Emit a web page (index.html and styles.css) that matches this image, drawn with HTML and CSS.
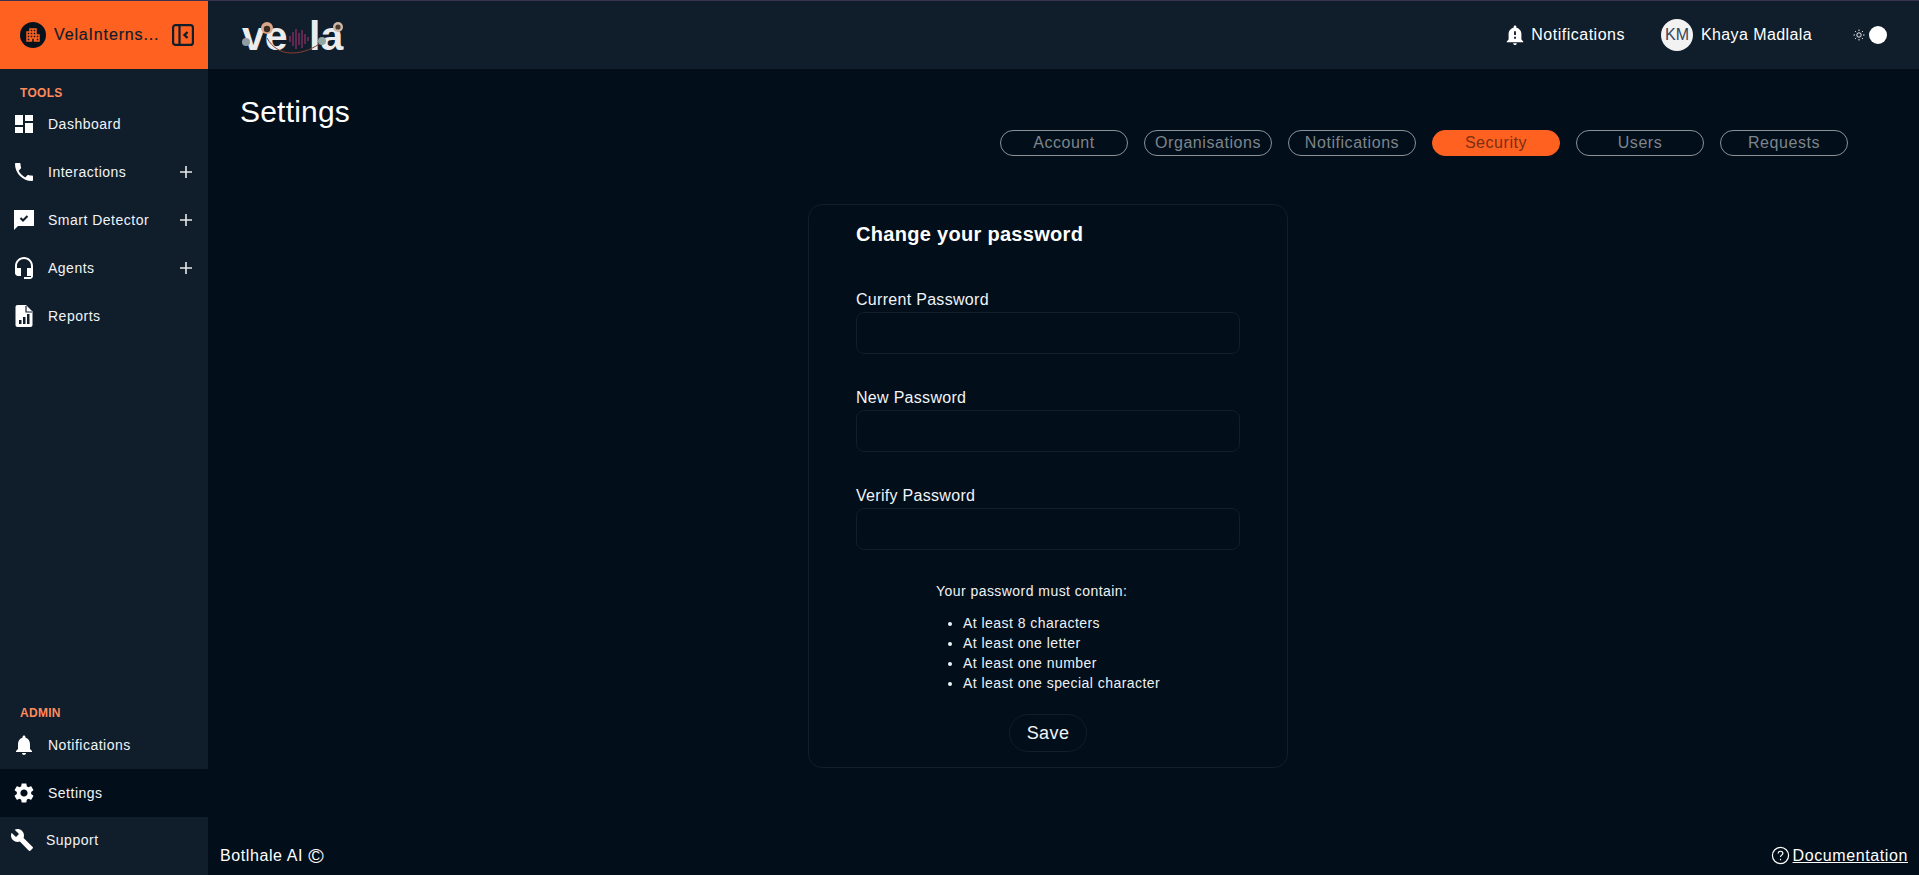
FILE: index.html
```html
<!DOCTYPE html>
<html>

<head>
    <title>Settings</title>
    <link rel="stylesheet" href="styles.css">
</head>

<body>
    <aside class="sidebar">
        <div class="org">
            <span class="org-badge">
                <svg viewBox="0 0 24 24" width="18" height="18"><path fill="#ff6120" d="M17 11V3H7v4H3v14h8v-4h2v4h8V11h-4zM7 19H5v-2h2v2zm0-4H5v-2h2v2zm0-4H5V9h2v2zm4 4H9v-2h2v2zm0-4H9V9h2v2zm0-4H9V5h2v2zm4 8h-2v-2h2v2zm0-4h-2V9h2v2zm0-4h-2V5h2v2zm4 12h-2v-2h2v2zm0-4h-2v-2h2v2z"/></svg>
            </span>
            <span class="org-name">VelaInterns...</span>
            <svg class="collapse" viewBox="0 0 22 22" width="22" height="22" fill="none" stroke="#101d2b" stroke-width="2.200"><rect x="1.100" y="1.100" width="19.800" height="19.800" rx="2.500"/><path d="M7.500 1v20"/><path d="M15.500 8l-3 3 3 3" stroke-width="2.400"/></svg>
        </div>

        <div class="nav-label tools-label">TOOLS</div>
        <a class="nav-item">
            <svg class="nav-icon" viewBox="0 0 24 24"><path d="M3 13h8V3H3v10zm0 8h8v-6H3v6zm10 0h8V11h-8v10zm0-18v6h8V3h-8z"/></svg>
            <span>Dashboard</span>
        </a>
        <a class="nav-item">
            <svg class="nav-icon" viewBox="0 0 24 24"><path d="M6.620 10.790c1.440 2.830 3.760 5.140 6.590 6.590l2.200-2.200c.27-.27.67-.36 1.020-.24 1.120.37 2.330.57 3.570.57.55 0 1 .45 1 1V20c0 .55-.45 1-1 1-9.390 0-17-7.610-17-17 0-.55.45-1 1-1h3.500c.55 0 1 .45 1 1 0 1.250.2 2.450.57 3.570.11.35.03.74-.25 1.020l-2.200 2.200z"/></svg>
            <span>Interactions</span>
            <svg class="plus" viewBox="0 0 14 14"><path d="M7 1v12M1 7h12"/></svg>
        </a>
        <a class="nav-item">
            <svg class="nav-icon" viewBox="0 0 24 24"><path d="M2 2h20v16H6l-4 4z"/><path d="M8.500 10l2.500 2.500 4.500-4.500" fill="none" stroke="#101d2b" stroke-width="2"/></svg>
            <span>Smart Detector</span>
            <svg class="plus" viewBox="0 0 14 14"><path d="M7 1v12M1 7h12"/></svg>
        </a>
        <a class="nav-item">
            <svg class="nav-icon" viewBox="0 0 24 24"><path d="M12 1c-5 0-9 4-9 9v7c0 1.660 1.340 3 3 3h3v-8H5v-2c0-3.870 3.130-7 7-7s7 3.130 7 7v2h-4v8h4v1h-7v2h6c1.660 0 3-1.340 3-3V10c0-5-4-9-9-9z"/></svg>
            <span>Agents</span>
            <svg class="plus" viewBox="0 0 14 14"><path d="M7 1v12M1 7h12"/></svg>
        </a>
        <a class="nav-item">
            <svg class="nav-icon" viewBox="0 0 24 24"><path d="M14 1H5.500C4.400 1 3.500 1.900 3.500 3v18c0 1.100.9 2 2 2h13c1.100 0 2-.9 2-2V7.500z"/><path d="M14 2v6h6" fill="none" stroke="#101d2b" stroke-width="1.200"/><path d="M7 16h2.500v4H7zM11 13h2.500v7H11zM15 10h2.500v10H15z" fill="#101d2b"/></svg>
            <span>Reports</span>
        </a>

        <div class="nav-label admin-label">ADMIN</div>
        <a class="nav-item">
            <svg class="nav-icon" viewBox="0 0 24 24"><path d="M12 22c1.100 0 2-.9 2-2h-4c0 1.100.9 2 2 2zm6-6v-5c0-3.070-1.630-5.640-4.500-6.320V4c0-.83-.67-1.500-1.500-1.500s-1.500.67-1.500 1.500v.68C7.640 5.360 6 7.920 6 11v5l-2 2v1h16v-1l-2-2z"/></svg>
            <span>Notifications</span>
        </a>
        <a class="nav-item active">
            <svg class="nav-icon" viewBox="0 0 24 24"><path d="M19.140 12.940c.04-.3.06-.61.06-.94 0-.32-.02-.64-.07-.94l2.030-1.580c.18-.14.23-.41.12-.61l-1.920-3.320c-.12-.22-.37-.29-.59-.22l-2.390.96c-.5-.38-1.030-.7-1.620-.94l-.36-2.540c-.04-.24-.24-.41-.48-.41h-3.840c-.24 0-.43.17-.47.41l-.36 2.540c-.59.24-1.130.57-1.620.94l-2.390-.96c-.22-.08-.47 0-.59.22L2.740 8.870c-.12.21-.08.47.12.61l2.030 1.580c-.05.3-.09.63-.09.94s.02.64.07.94l-2.030 1.580c-.18.14-.23.41-.12.61l1.920 3.320c.12.22.37.29.59.22l2.390-.96c.5.38 1.030.7 1.620.94l.36 2.540c.05.24.24.41.48.41h3.840c.24 0 .44-.17.47-.41l.36-2.540c.59-.24 1.130-.56 1.620-.94l2.390.96c.22.08.47 0 .59-.22l1.920-3.320c.12-.22.07-.47-.12-.61l-2.010-1.580zM12 15.600c-1.980 0-3.600-1.620-3.600-3.600s1.620-3.600 3.600-3.600 3.600 1.620 3.600 3.600-1.620 3.600-3.600 3.600z"/></svg>
            <span>Settings</span>
        </a>
        <a class="nav-item support">
            <svg class="nav-icon" viewBox="0 0 24 24"><path d="M22.700 19l-9.100-9.100c.9-2.300.4-5-1.500-6.900-2-2-5-2.400-7.400-1.300L9 6 6 9 1.600 4.700C.4 7.100.9 10.100 2.900 12.100c1.900 1.900 4.600 2.400 6.900 1.500l9.100 9.100c.4.4 1 .4 1.400 0l2.300-2.300c.5-.4.5-1.100.1-1.400z"/></svg>
            <span>Support</span>
        </a>
    </aside>

    <div class="page">
        <header class="topbar">
            <svg class="logo" viewBox="0 0 120 50" width="120" height="50">
                <text x="2" y="40" class="logo-text">ve</text>
                <text x="69" y="40" class="logo-text">la</text>
                <path d="M50 26v6M53 22v14M56 19v20M59 23v12M62 20v18M65 24v10M68 27v4" stroke="#7c2d5c" stroke-width="1.500"/>
                <path d="M27 28c5 9 13 15 25 15 12 0 22-5 30-11" fill="none" stroke="#8a4030" stroke-width="1"/>
                <circle cx="27" cy="18" r="6" fill="#d9a58a"/><circle cx="27" cy="19" r="3.200" fill="#3a2a24"/>
                <circle cx="6" cy="32" r="4" fill="#8f9ca6"/>
                <circle cx="82" cy="31" r="4" fill="#8fa8a4"/>
                <circle cx="98" cy="17" r="5" fill="#cbb8a6"/><circle cx="98" cy="17" r="2.600" fill="#4a3a30"/>
            </svg>
            <div class="topbar-right">
                <div class="top-notify">
                    <svg viewBox="0 0 24 24" width="22" height="22" fill="#fff"><path d="M12 23c1.100 0 1.990-.89 1.990-1.990h-3.980c0 1.100.89 1.990 1.990 1.990zm7-6v-6c0-3.350-2.340-6.150-5.500-6.830V3c0-.83-.67-1.500-1.500-1.500s-1.500.67-1.500 1.500v1.170C7.340 4.850 5 7.650 5 11v6l-2 2v1h18v-1l-2-2zm-6-1h-2v-2h2v2zm0-4h-2V8h2v4z"/></svg>
                    <span>Notifications</span>
                </div>
                <div class="user">
                    <span class="avatar">KM</span>
                    <span>Khaya Madlala</span>
                </div>
                <div class="theme-toggle">
                    <svg viewBox="0 0 12 12" width="12" height="12" fill="none" stroke="#fff" stroke-width=".9"><circle cx="6" cy="6" r="2.200"/><path d="M6 .5v1.500M6 10v1.500M.5 6H2M10 6h1.500M2.100 2.100l1 1M8.900 8.900l1 1M2.100 9.900l1-1M8.900 3.100l1-1"/></svg>
                    <span class="knob"></span>
                </div>
            </div>
        </header>

        <main class="content">
            <div class="title-row">
                <h1>Settings</h1>
                <nav class="tabs">
                    <a class="tab">Account</a>
                    <a class="tab">Organisations</a>
                    <a class="tab">Notifications</a>
                    <a class="tab current">Security</a>
                    <a class="tab">Users</a>
                    <a class="tab">Requests</a>
                </nav>
            </div>

            <section class="card">
                <h2>Change your password</h2>
                <label class="field">Current Password<input type="password"></label>
                <label class="field">New Password<input type="password"></label>
                <label class="field">Verify Password<input type="password"></label>
                <div class="rules">
                    <p>Your password must contain:</p>
                    <ul>
                        <li>At least 8 characters</li>
                        <li>At least one letter</li>
                        <li>At least one number</li>
                        <li>At least one special character</li>
                    </ul>
                </div>
                <button class="save">Save</button>
            </section>
        </main>

        <footer class="footer">
            <span>Botlhale AI <span class="copy">©</span></span>
            <span class="docs">
                <svg viewBox="0 0 16 16" width="19" height="19" fill="none" stroke="#fff" stroke-width="1"><circle cx="8" cy="8" r="6.800"/><path d="M6 6.300c0-1.200 1-1.900 2-1.900s2 .7 2 1.800c0 1.500-2 1.500-2 3"/><path d="M8 10.800v1.200"/></svg>
                <a class="docs-link">Documentation</a>
            </span>
        </footer>
    </div>
</body>

</html>
```

FILE: styles.css
```css
* {
    box-sizing: border-box;
}

html,
body {
    height: 100%;
}

body {
    margin: 0;
    display: flex;
    overflow: hidden;
    border-top: 1px solid #3a3350;
    background-color: #020e19;
    color: #fff;
    font-family: "Liberation Sans", Arial, sans-serif;
}

/* sidebar */

.sidebar {
    width: 208px;
    flex-shrink: 0;
    display: flex;
    flex-direction: column;
    padding-bottom: 12px;
    background-color: #101d2b;
}

.org {
    height: 68px;
    display: flex;
    align-items: center;
    padding-left: 20px;
    background-color: #ff6120;
    color: #101d2b;
}

.org-badge {
    width: 26px;
    height: 26px;
    border-radius: 50%;
    display: flex;
    align-items: center;
    justify-content: center;
    background-color: #07121d;
}

.org-name {
    margin-left: 8px;
    width: 118px;
    font-size: 16px;
    letter-spacing: .85px;
    white-space: nowrap;
    -webkit-text-stroke: .2px #101d2b;
}

.nav-label {
    padding-left: 20px;
    font-size: 12px;
    line-height: 14px;
    font-weight: bold;
    letter-spacing: .3px;
    color: #ff8a5c;
}

.tools-label {
    margin-top: 17px;
    margin-bottom: 0;
}

.admin-label {
    margin-top: auto;
    margin-bottom: 1px;
}

.nav-item {
    height: 48px;
    flex-shrink: 0;
    display: flex;
    align-items: center;
    padding-left: 12px;
    font-size: 14px;
    letter-spacing: .5px;
    color: #f1f4f8;
}

.nav-item.active {
    background-color: #020e19;
}

.nav-item.support {
    height: 46px;
    padding-left: 10px;
}

.nav-icon {
    width: 24px;
    height: 24px;
    margin-right: 12px;
    flex-shrink: 0;
    fill: #fff;
}

.plus {
    width: 14px;
    height: 14px;
    margin-left: auto;
    margin-right: 15px;
    fill: none;
    stroke: #e8e8e8;
    stroke-width: 1.600;
}

/* top bar */

.page {
    flex: 1;
    min-width: 0;
    display: flex;
    flex-direction: column;
}

.topbar {
    height: 68px;
    flex-shrink: 0;
    display: flex;
    align-items: center;
    justify-content: space-between;
    padding-left: 32px;
    padding-right: 32px;
    background-color: #101d2b;
}

.logo-text {
    font-family: "Liberation Sans", Arial, sans-serif;
    font-size: 41px;
    font-weight: bold;
    fill: #ececec;
}

.topbar-right {
    display: flex;
    align-items: center;
    font-size: 16px;
}

.top-notify {
    display: flex;
    align-items: center;
    gap: 5px;
    letter-spacing: .5px;
}

.user {
    display: flex;
    align-items: center;
    gap: 8px;
    margin-left: 36px;
    letter-spacing: .4px;
}

.avatar {
    width: 32px;
    height: 32px;
    border-radius: 50%;
    display: flex;
    align-items: center;
    justify-content: center;
    background-color: #f2f2f2;
    color: #33475b;
    letter-spacing: 0;
}

.theme-toggle {
    display: flex;
    align-items: center;
    gap: 4px;
    margin-left: 41px;
}

.knob {
    width: 18px;
    height: 18px;
    border-radius: 50%;
    background-color: #fff;
}

/* main */

.content {
    padding-left: 32px;
    padding-right: 71px;
}

.title-row {
    height: 87px;
    display: flex;
    justify-content: space-between;
    align-items: flex-end;
}

h1 {
    margin: 0;
    align-self: flex-start;
    margin-top: 25px;
    font-size: 30px;
    font-weight: 400;
    line-height: 36px;
    letter-spacing: .2px;
}

.tabs {
    display: flex;
    gap: 16px;
}

.tab {
    width: 128px;
    height: 26px;
    display: flex;
    align-items: center;
    justify-content: center;
    border: 1px solid #8b9197;
    border-radius: 13px;
    font-size: 16px;
    letter-spacing: .55px;
    color: #7d858c;
    white-space: nowrap;
}

.tab.current {
    border-color: #ff6120;
    background-color: #ff6120;
    color: #7a3014;
}

.card {
    width: 480px;
    height: 564px;
    margin-top: 48px;
    margin-left: 568px;
    padding: 17px 47px 0;
    border: 1px solid #111e2b;
    border-radius: 14px;
}

h2 {
    margin: 0 0 28px;
    font-size: 20px;
    line-height: 24px;
    letter-spacing: .3px;
}

.field {
    display: block;
    height: 98px;
    padding-top: 16px;
    font-size: 16px;
    line-height: 20px;
    letter-spacing: .3px;
    color: #f1f4f8;
}

.field input {
    display: block;
    width: 100%;
    height: 42px;
    margin-top: 2px;
    border: 1px solid #111e2b;
    border-radius: 8px;
    background-color: transparent;
}

.rules {
    margin-top: 13px;
    padding-left: 80px;
    font-size: 14px;
    line-height: 20px;
    letter-spacing: .45px;
    color: #eef2f6;
}

.rules p {
    margin: 0 0 12px;
}

.rules ul {
    margin: 0;
    padding-left: 27px;
}

.save {
    display: block;
    width: 78px;
    height: 38px;
    margin: 21px auto 0;
    border: 1px solid #111e2b;
    border-radius: 19px;
    background-color: transparent;
    color: #f1f4f8;
    font-family: inherit;
    font-size: 18px;
    letter-spacing: .4px;
}

/* footer */

.footer {
    margin-top: auto;
    display: flex;
    justify-content: space-between;
    align-items: center;
    padding: 0 11px 10px 12px;
    font-size: 16px;
    letter-spacing: .6px;
}

.copy {
    font-size: 21px;
    line-height: 19px;
    vertical-align: -2px;
}

.docs {
    display: flex;
    align-items: center;
    gap: 3px;
}

.docs-link {
    text-decoration: underline;
}
```
